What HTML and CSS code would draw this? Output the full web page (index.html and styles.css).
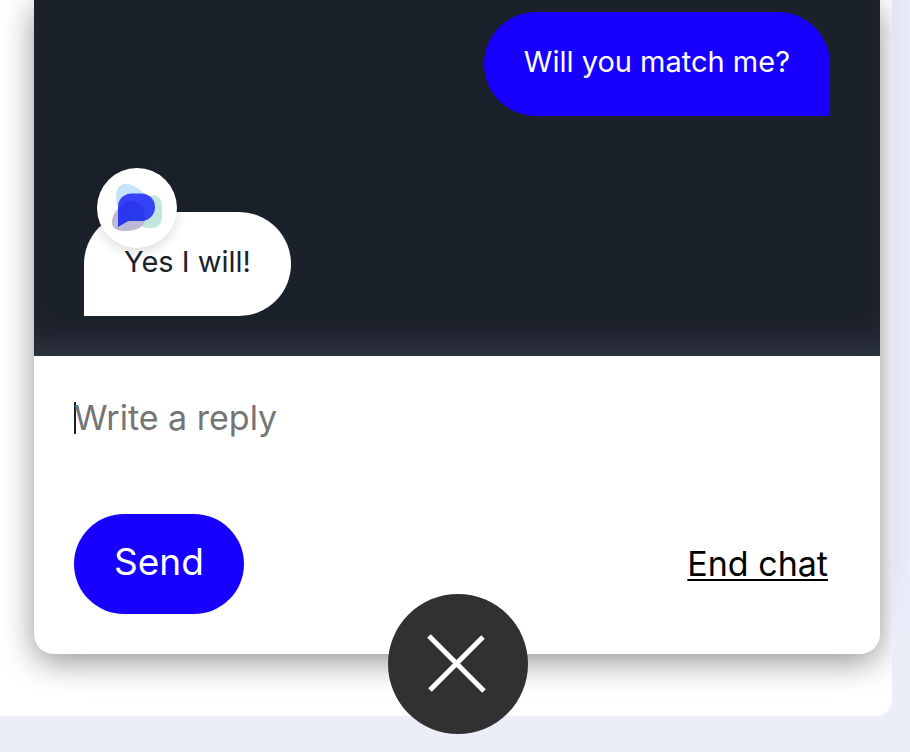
FILE: index.html
```html
<!DOCTYPE html>
<html lang="en">
<head>
<meta charset="utf-8">
<meta name="viewport" content="width=device-width, initial-scale=1">
<title>Chat</title>
<link rel="stylesheet" href="styles.css">
</head>
<body>
<main class="page">
  <section class="chat" aria-label="Chat">
    <div class="messages">
      <p class="bubble bubble-user">Will you match me?</p>
      <div class="bubble bubble-agent">
        <span class="avatar">
          <svg viewBox="0 0 80 80" width="80" height="80" aria-hidden="true">
            <path fill="#c7e3fa" d="M19 30C19 20 23 15 31 16C40 18 52 27 51 35C50 43 38 47 29 44C22 42 19 37 19 30Z"/>
            <path fill="#c1e5df" d="M50 29C58 25 65 28 65 40V47C65 57 61 60 53 60C43 60 35 54 35 47C35 39 44 32 50 29Z"/>
            <path fill="#bdb8d5" d="M33 33C42 33 48 41 48 50C48 59 40 63 28 63C18 63 14 58 15 53C16 45 25 33 33 33Z"/>
            <path fill="#2129f8" fill-opacity=".87" d="M21 59V39C21 31 27 25.500 35 25.500H44C52 25.500 58 31 58 39C58 47 52 53 44 53H32C28 54 25 57 21 59Z"/>
            <path fill="#1b2bdc" fill-opacity=".35" d="M21 43Q26 33 33 33Q48 35 48 50V53H32C28 54 25 57 21 59Z"/>
            <path fill="#1f49ee" fill-opacity=".22" d="M35 47C35 39 44 33 51 29V35C48 42 48 47 48 53H37Q35 51 35 47Z"/>
          </svg>
        </span>
        <p class="bubble-text">Yes I will!</p>
      </div>
    </div>
    <form class="composer">
      <input class="reply" type="text" placeholder="Write a reply" aria-label="Write a reply">
      <div class="actions">
        <button class="send" type="button">Send</button>
        <a class="end" href="#">End chat</a>
      </div>
    </form>
  </section>
</main>
<button class="close" type="button" aria-label="Close chat">
  <svg viewBox="0 0 140 140" width="140" height="140" aria-hidden="true">
    <path d="M41 42L96 97M95 43L42 96" fill="none" stroke="#fff" stroke-width="5"/>
  </svg>
</button>
</body>
</html>
```
FILE: styles.css
```css
* {
  box-sizing: border-box;
}

body {
  position: relative;
  display: flex;
  min-height: 100vh;
  margin: 0;
  padding: 0 18px 36px 0;
  background: #ebedf9;
  color: #1b212b;
  font-family: Inter, "Liberation Sans", sans-serif;
  font-size: 29px;
  line-height: 24px;
}

body::after {
  content: "";
  position: absolute;
  top: 0;
  right: 0;
  bottom: 112px;
  width: 18px;
  background: linear-gradient(to right, #dfe5f3, #e8ecf9);
  mask-image: linear-gradient(to top, transparent, #000 80px);
}

p {
  margin: 0;
}

.page {
  display: flex;
  flex: 1;
  padding: 0 12px 62px 34px;
  overflow: hidden;
  border-radius: 0 0 16px 0;
  background: #fff;
}

.chat {
  display: flex;
  flex: 1;
  flex-direction: column;
  border-radius: 0 0 20px 20px;
  background: #fff;
  box-shadow: 0 8px 32px rgba(0, 0, 0, 0.42);
}

.messages {
  display: flex;
  flex: 1;
  flex-direction: column;
  justify-content: flex-end;
  gap: 96px;
  padding: 12px 50px 40px;
  background: #1b212b;
  box-shadow: inset 0 -28px 32px -16px #303643;
}

.bubble {
  padding: 38px 40px 42px;
}

.bubble-user {
  align-self: flex-end;
  border-radius: 52px 52px 0 52px;
  background: #1800ff;
  color: #fff;
}

.bubble-agent {
  position: relative;
  align-self: flex-start;
  border-radius: 52px 52px 52px 0;
  background: #fff;
}

.avatar {
  position: absolute;
  top: -44px;
  left: 13px;
  width: 80px;
  height: 80px;
  border-radius: 50%;
  background: #fff;
  box-shadow: 0 4px 12px rgba(0, 0, 0, 0.14);
}

.bubble-text {
  position: relative;
}

.composer {
  padding: 40px 52px 40px 40px;
}

.reply {
  display: block;
  width: 100%;
  height: 42px;
  margin-bottom: 76px;
  padding: 0;
  border: 0;
  outline: 0;
  background: linear-gradient(#1b212b, #1b212b) 0 6px / 2px 32px no-repeat;
  font: inherit;
  font-size: 34px;
}

.reply::placeholder {
  color: #757575;
  opacity: 1;
}

.actions {
  display: flex;
  align-items: center;
  justify-content: space-between;
}

.send {
  height: 100px;
  padding: 0 40px 4px;
  border: 0;
  border-radius: 50px;
  background: #1800ff;
  color: #fff;
  font: inherit;
  font-size: 37px;
}

.end {
  color: #000;
  font-size: 34px;
  text-decoration-thickness: 2px;
  text-underline-offset: 3px;
}

.close {
  position: absolute;
  bottom: 18px;
  left: calc(50% + 3px);
  width: 140px;
  height: 140px;
  padding: 0;
  border: 0;
  border-radius: 50%;
  background: #313133;
  transform: translateX(-50%);
}

.close svg {
  display: block;
}
```
